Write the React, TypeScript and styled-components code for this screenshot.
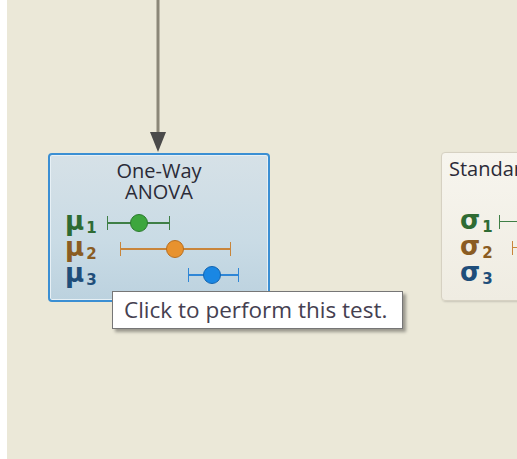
import styled, { createGlobalStyle } from "styled-components";

const GlobalStyle = createGlobalStyle`
  html, body {
    margin: 0;
    padding: 0;
    background: #ffffff;
  }
  body {
    font-family: "Open Sans", "DejaVu Sans", sans-serif;
  }
`;

const Page = styled.div`
  width: 517px;
  height: 459px;
  padding-left: 7px;
  box-sizing: border-box;
  overflow: hidden;
`;

const Canvas = styled.div`
  position: relative;
  width: 510px;
  height: 459px;
  background: #ebe8d8;
  overflow: hidden;
`;

const Connector = styled.svg`
  position: absolute;
  left: 143px;
  top: 0;
`;

const Node = styled.div<{ $x: number; $y: number; $active?: boolean }>`
  position: absolute;
  left: ${(p) => p.$x}px;
  top: ${(p) => p.$y}px;
  width: 222px;
  height: 149px;
  box-sizing: border-box;
  border-radius: 4px;
  border: ${(p) => (p.$active ? "2px solid #3b8fd3" : "1px solid #d6d1c2")};
  background: ${(p) =>
    p.$active
      ? "linear-gradient(#d6e1e7, #c9dbe5 60%, #bcd2df)"
      : "linear-gradient(#f7f5ee, #efece2)"};
  box-shadow: ${(p) =>
    p.$active ? "inset 0 0 0 1px #e7f0f5" : "1px 1px 2px rgba(0,0,0,0.15)"};
  display: flex;
  flex-direction: column;
  padding-top: 6px;
`;

const Title = styled.div<{ $left?: boolean }>`
  font-size: 20px;
  line-height: 20.5px;
  color: #2b2b38;
  text-align: ${(p) => (p.$left ? "left" : "center")};
  padding-left: ${(p) => (p.$left ? "7px" : "0")};
  white-space: nowrap;
`;

const Rows = styled.div<{ $gap: number }>`
  display: flex;
  flex-direction: column;
  margin-top: ${(p) => p.$gap}px;
`;

const Row = styled.div`
  display: flex;
  align-items: center;
  height: 26px;
`;

const Symbol = styled.span<{ $color: string; $indent: number }>`
  display: flex;
  align-items: baseline;
  width: 42px;
  height: 26px;
  box-sizing: border-box;
  padding-left: ${(p) => p.$indent}px;
  font-family: "DejaVu Sans", sans-serif;
  font-weight: bold;
  font-size: 26px;
  line-height: 22px;
  color: ${(p) => p.$color};
  white-space: nowrap;

  sub {
    font-size: 15px;
    line-height: 15px;
    position: relative;
    top: 3px;
    margin-left: 2px;
  }
`;

const Track = styled.div`
  position: relative;
  flex: 1;
  height: 26px;
`;

const Whisker = styled.div<{ $color: string }>`
  position: absolute;
  top: 50%;
  height: 14px;
  transform: translateY(-50%);
  border-left: 1.5px solid ${(p) => p.$color};
  border-right: 1.5px solid ${(p) => p.$color};
  box-sizing: border-box;

  &::before {
    content: "";
    position: absolute;
    left: 0;
    right: 0;
    top: 6.25px;
    height: 1.5px;
    background: ${(p) => p.$color};
  }
`;

const Dot = styled.div<{ $fill: string; $edge: string }>`
  position: absolute;
  top: 50%;
  width: 18px;
  height: 18px;
  margin: -9px 0 0 -9px;
  border-radius: 50%;
  box-sizing: border-box;
  background: ${(p) => p.$fill};
  border: 1px solid ${(p) => p.$edge};
`;

const Tooltip = styled.div`
  position: absolute;
  left: 105px;
  top: 291px;
  width: 291px;
  height: 38px;
  box-sizing: border-box;
  background: #ffffff;
  border: 1px solid #767676;
  box-shadow: 3px 3px 3px rgba(0, 0, 0, 0.35);
  padding-left: 11px;
  font-size: 22.5px;
  line-height: 36px;
  color: #454050;
  white-space: nowrap;
`;

type Stat = {
  sub: string;
  color: string;
  line: string;
  fill: string;
  edge: string;
  from: number;
  to: number;
  mid: number;
};

const means: Stat[] = [
  { sub: "1", color: "#2e6b33", line: "#3f7f46", fill: "#3da63d", edge: "#2b7a2e", from: 15, to: 78, mid: 47 },
  { sub: "2", color: "#8a5c22", line: "#c9853a", fill: "#e8922e", edge: "#b86e1f", from: 28, to: 139, mid: 83 },
  { sub: "3", color: "#1f4e7a", line: "#2f86d6", fill: "#1a87e3", edge: "#1264b0", from: 96, to: 147, mid: 120 },
];

const sigmas = [
  { sub: "1", color: "#2e6b33", line: "#3f7f46", from: 15 },
  { sub: "2", color: "#8a5c22", line: "#c9853a", from: 28 },
  { sub: "3", color: "#1f4e7a", line: "#2f86d6", from: 200 },
];

const App = () => {
  return (
    <Page>
      <GlobalStyle />
      <Canvas>
        <Connector width="30" height="154" viewBox="0 0 30 154">
          <line x1="8" y1="0" x2="8" y2="136" stroke="#8b8778" strokeWidth="3" />
          <polygon points="0,132 16,132 8,152" fill="#4a4a4a" />
        </Connector>

        <Node $x={41} $y={153} $active>
          <Title>
            One-Way
            <br />
            ANOVA
          </Title>
          <Rows $gap={8}>
            {means.map((m) => (
              <Row key={m.sub}>
                <Symbol $color={m.color} $indent={15}>
                  μ<sub>{m.sub}</sub>
                </Symbol>
                <Track>
                  <Whisker
                    $color={m.line}
                    style={{ left: m.from, width: m.to - m.from }}
                  />
                  <Dot $fill={m.fill} $edge={m.edge} style={{ left: m.mid }} />
                </Track>
              </Row>
            ))}
          </Rows>
        </Node>

        <Node $x={434} $y={152}>
          <Title $left>Standard Deviations</Title>
          <Rows $gap={29}>
            {sigmas.map((s) => (
              <Row key={s.sub}>
                <Symbol $color={s.color} $indent={18}>
                  σ<sub>{s.sub}</sub>
                </Symbol>
                <Track>
                  <Whisker $color={s.line} style={{ left: s.from, width: 60 }} />
                </Track>
              </Row>
            ))}
          </Rows>
        </Node>

        <Tooltip>Click to perform this test.</Tooltip>
      </Canvas>
    </Page>
  );
};

export default App;
